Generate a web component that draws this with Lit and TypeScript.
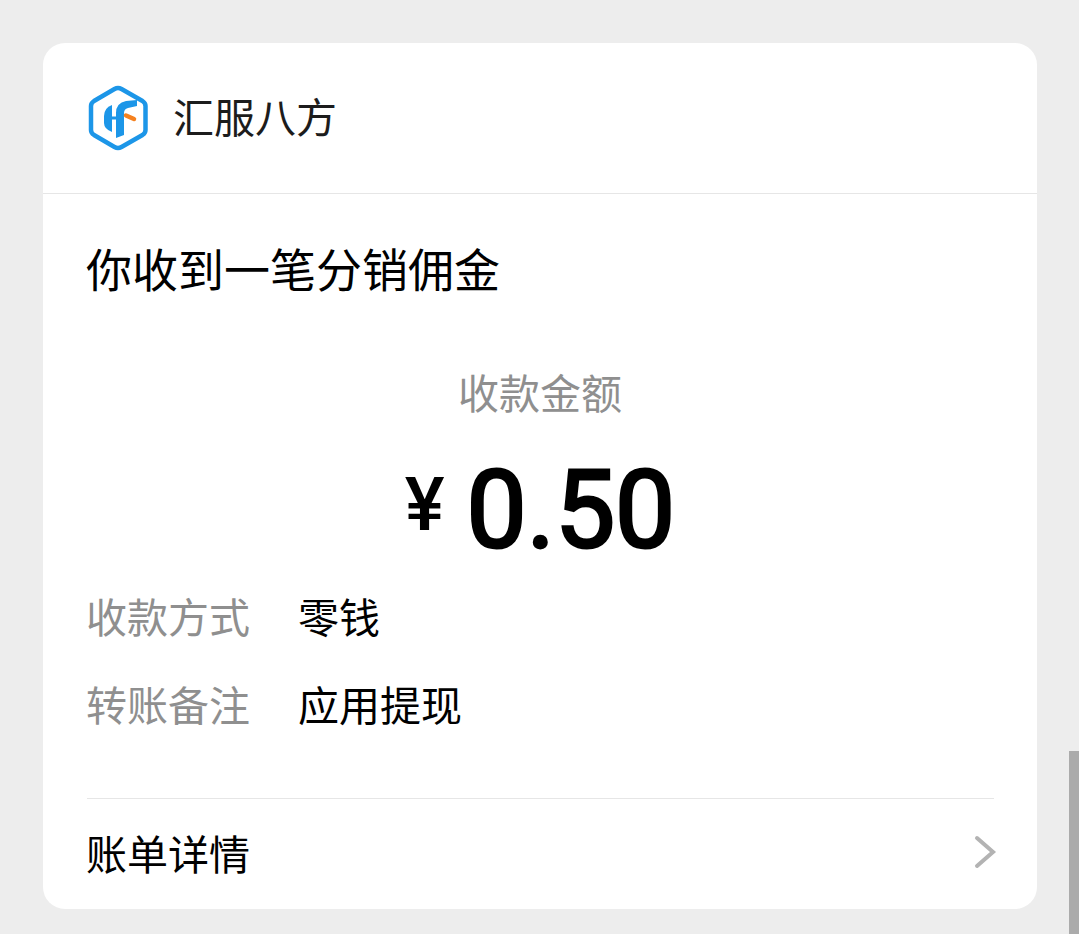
import { LitElement, html, css } from "lit";
import { customElement } from "lit/decorators.js";

@customElement("app-root")
export class AppRoot extends LitElement {
  static styles = css`
    :host {
      display: block;
      position: relative;
      width: 1079px;
      height: 934px;
      overflow: hidden;
      background: #ededed;
      font-family: "Noto Sans CJK SC", "Noto Sans", sans-serif;
      color: #000;
    }
    .page { padding: 43px 42px 25px 43px; }
    .card {
      height: 866px;
      background: #fff;
      border-radius: 22px;
      display: flex;
      flex-direction: column;
      overflow: hidden;
    }
    .head {
      height: 151px;
      flex: none;
      box-sizing: border-box;
      border-bottom: 1px solid #e6e6e6;
      display: flex;
      align-items: center;
      gap: 25px;
      padding: 0 44px 0 45px;
    }
    .logo { width: 60px; height: 66px; flex: none; display: block; }
    .brand { font-size: 41px; line-height: 52px; color: #1c1c1c; margin-top: -7px; }
    .body { flex: 1; padding: 0 43px; display: flex; flex-direction: column; }
    .title { margin-top: 43px; font-size: 46px; line-height: 60px; }
    .label { margin-top: 64px; text-align: center; font-size: 41px; line-height: 60px; color: #8f8f8f; }
    .amount {
      margin-top: 30px;
      display: flex;
      justify-content: center;
      align-items: flex-start;
      height: 120px;
      font-family: Roboto, sans-serif;
      line-height: 120px;
    }
    .yen { font-size: 75px; margin: -7px 22px 0 0; font-weight: 500; }
    .value { font-size: 107px; letter-spacing: 0; font-weight: 400; -webkit-text-stroke: 3px #000; }
    .rows { display: flex; flex-direction: column; gap: 28px; margin-top: 14px; }
    .row { display: flex; font-size: 41px; line-height: 60px; }
    .key { width: 212px; color: #8f8f8f; flex: none; }
    .foot {
      margin: 65px 0 0 1px;
      border-top: 1px solid #e6e6e6;
      display: flex;
      align-items: center;
      justify-content: space-between;
      height: 106px;
      font-size: 41px;
    }
    .foot span { margin-left: -1px; }
    .chev { width: 24px; height: 36px; display: block; margin-right: -3px; }
    .scroll {
      position: absolute;
      left: 1069px;
      top: 751px;
      width: 10px;
      height: 183px;
      background: #ababab;
    }
  `;

  render() {
    return html`
      <div class="page">
        <div class="card">
          <div class="head">
            <svg class="logo" viewBox="0 0 60 66" fill="none">
              <path d="M26.5 4 Q30 2 33.5 4 L54.5 16 Q57.5 18 57.5 21 V45 Q57.5 48 54.5 50 L33.5 62 Q30 64 26.5 62 L6 50 Q3 48 3 45 V21 Q3 18 6 16 Z" stroke="#1c96e8" stroke-width="4.5" stroke-linejoin="round"/>
              <path d="M24 20 Q16 23 16 31 V38 Q16 44 24 47 Z" fill="#1c96e8"/>
              <path d="M24 33 H29" stroke="#1c96e8" stroke-width="3"/>
              <path d="M28 53 L36 50 V28 Q36 24 40 23 L49 21 V15 L38 16 Q28 18 28 28 Z" fill="#1c96e8"/>
              <path d="M38 30.5 L46 34" stroke="#f5811f" stroke-width="4.5" stroke-linecap="round"/>
            </svg>
            <div class="brand">汇服八方</div>
          </div>
          <div class="body">
            <div class="title">你收到一笔分销佣金</div>
            <div class="label">收款金额</div>
            <div class="amount"><span class="yen">¥</span><span class="value">0.50</span></div>
            <div class="rows">
              <div class="row"><span class="key">收款方式</span><span>零钱</span></div>
              <div class="row"><span class="key">转账备注</span><span>应用提现</span></div>
            </div>
            <div class="foot">
              <span>账单详情</span>
              <svg class="chev" viewBox="0 0 24 36" fill="none">
                <path d="M4 4 L20 18 L4 32" stroke="#b3b3b3" stroke-width="4" stroke-linecap="round"/>
              </svg>
            </div>
          </div>
        </div>
      </div>
      <div class="scroll"></div>
    `;
  }
}
